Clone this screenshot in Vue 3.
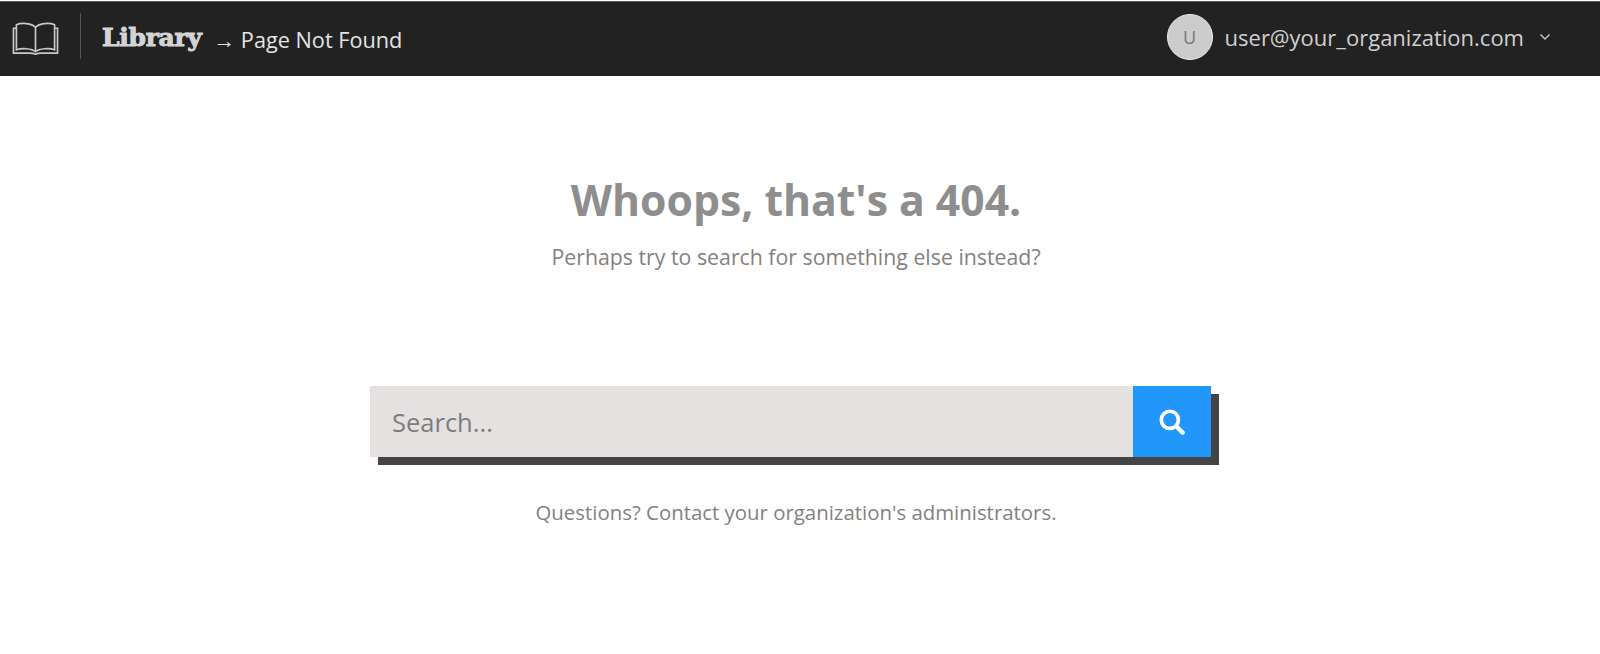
<script setup>
const email = "user@your_organization.com";
</script>
<template>
  <div class="page">
    <header class="topbar">
      <div class="brand">
        <svg class="book" viewBox="0 0 48 36" fill="none">
          <path d="M24 7C20 3 10 2 4.500 4.500V30C10 28 20 28.500 24 32C28 28.500 38 28 43.500 30V4.500C38 2 28 3 24 7Z" stroke="currentColor" stroke-width="1.700" />
          <path d="M24 7V32" stroke="currentColor" stroke-width="1.700" />
          <path d="M4.500 8H1.500V33.500H18C20 33.500 22 33.500 24 34.500C26 33.500 28 33.500 30 33.500H46.500V8H43.500" stroke="currentColor" stroke-width="1.700" />
        </svg>
        <span class="divider"></span>
        <span class="library">Library</span>
        <span class="crumb">→ Page Not Found</span>
      </div>
      <div class="user">
        <div class="avatar">U</div>
        <span class="email">{{ email }}</span>
        <svg class="chevron" viewBox="0 0 12 8" fill="none">
          <path d="M1.500 1.500L6 6L10.500 1.500" stroke="currentColor" stroke-width="1.300" />
        </svg>
      </div>
    </header>

    <main class="content">
      <h1 class="title">Whoops, that's a 404.</h1>
      <p class="subtitle">Perhaps try to search for something else instead?</p>

      <form class="search" @submit.prevent>
        <input class="search-input" type="text" placeholder="Search..." />
        <button class="search-btn" type="submit" aria-label="Search">
          <svg viewBox="0 0 28 28" fill="none">
            <circle cx="12" cy="12" r="8" stroke="white" stroke-width="3.400" />
            <path d="M18 18L24 24" stroke="white" stroke-width="4" stroke-linecap="round" />
          </svg>
        </button>
      </form>

      <p class="questions">Questions? Contact your organization's administrators.</p>
    </main>
  </div>
</template>

<style scoped>
.page {
  font-family: "Open Sans", "Noto Sans", sans-serif;
  background: white;
  min-height: 654px;
}

.topbar {
  height: 75px;
  margin-top: 1px;
  padding: 0 49px 0 12px;
  box-sizing: border-box;
  background: #222222;
  border-top: 1px solid #555555;
  display: flex;
  justify-content: space-between;
  align-items: center;
  color: #dddddd;
}

.brand {
  display: flex;
  align-items: center;
}

.book {
  width: 47px;
  height: 36px;
  margin-bottom: 2px;
  color: #c9c9c9;
}

.divider {
  width: 1px;
  height: 46px;
  background: #555555;
  margin: 0 21px 6px 21px;
}

.library {
  font-family: "DejaVu Serif", serif;
  font-weight: 700;
  font-size: 25px;
  letter-spacing: -0.3px;
  color: #d4d4d4;
  margin-right: 12px;
  margin-bottom: 4px;
  -webkit-text-stroke: 1px #d4d4d4;
}

.crumb {
  font-size: 21.700px;
  color: #e4e4e4;
}

.user {
  display: flex;
  align-items: center;
  margin-bottom: 4px;
}

.avatar {
  width: 44px;
  height: 44px;
  border: 1px solid #eeeeee;
  border-radius: 50%;
  background: #cccccc;
  color: #777777;
  font-size: 18px;
  display: flex;
  align-items: center;
  justify-content: center;
  margin-right: 12px;
}

.email {
  font-size: 22px;
  color: #d0d0d0;
}

.chevron {
  width: 12px;
  height: 8px;
  margin-left: 15px;
  color: #cccccc;
}

.content {
  display: flex;
  flex-direction: column;
  align-items: center;
  padding-right: 8px;
}

.title {
  margin: 95px 0 0;
  font-size: 42.700px;
  line-height: 58px;
  font-weight: 700;
  color: #8e8e8e;
}

.subtitle {
  margin: 14px 0 0;
  font-size: 21.300px;
  line-height: 28px;
  color: #85817f;
}

.search {
  margin: 115px 11px 0 0;
  width: 841px;
  height: 71px;
  display: flex;
  box-shadow: 8px 8px 0 #444444;
}

.search-input {
  flex: 1;
  min-width: 0;
  border: none;
  outline: none;
  padding: 0 22px;
  background: #e5e1e1;
  font-family: inherit;
  font-size: 25.500px;
  color: #777777;
}

.search-input::placeholder {
  color: #7d7d7d;
  opacity: 1;
}

.search-btn {
  width: 78px;
  border: none;
  padding: 0;
  background: #2196fb;
  display: flex;
  align-items: center;
  justify-content: center;
}

.search-btn svg {
  width: 30px;
  height: 30px;
}

.questions {
  margin: 41px 0 0;
  font-size: 20.400px;
  line-height: 28px;
  color: #85817f;
}
</style>
